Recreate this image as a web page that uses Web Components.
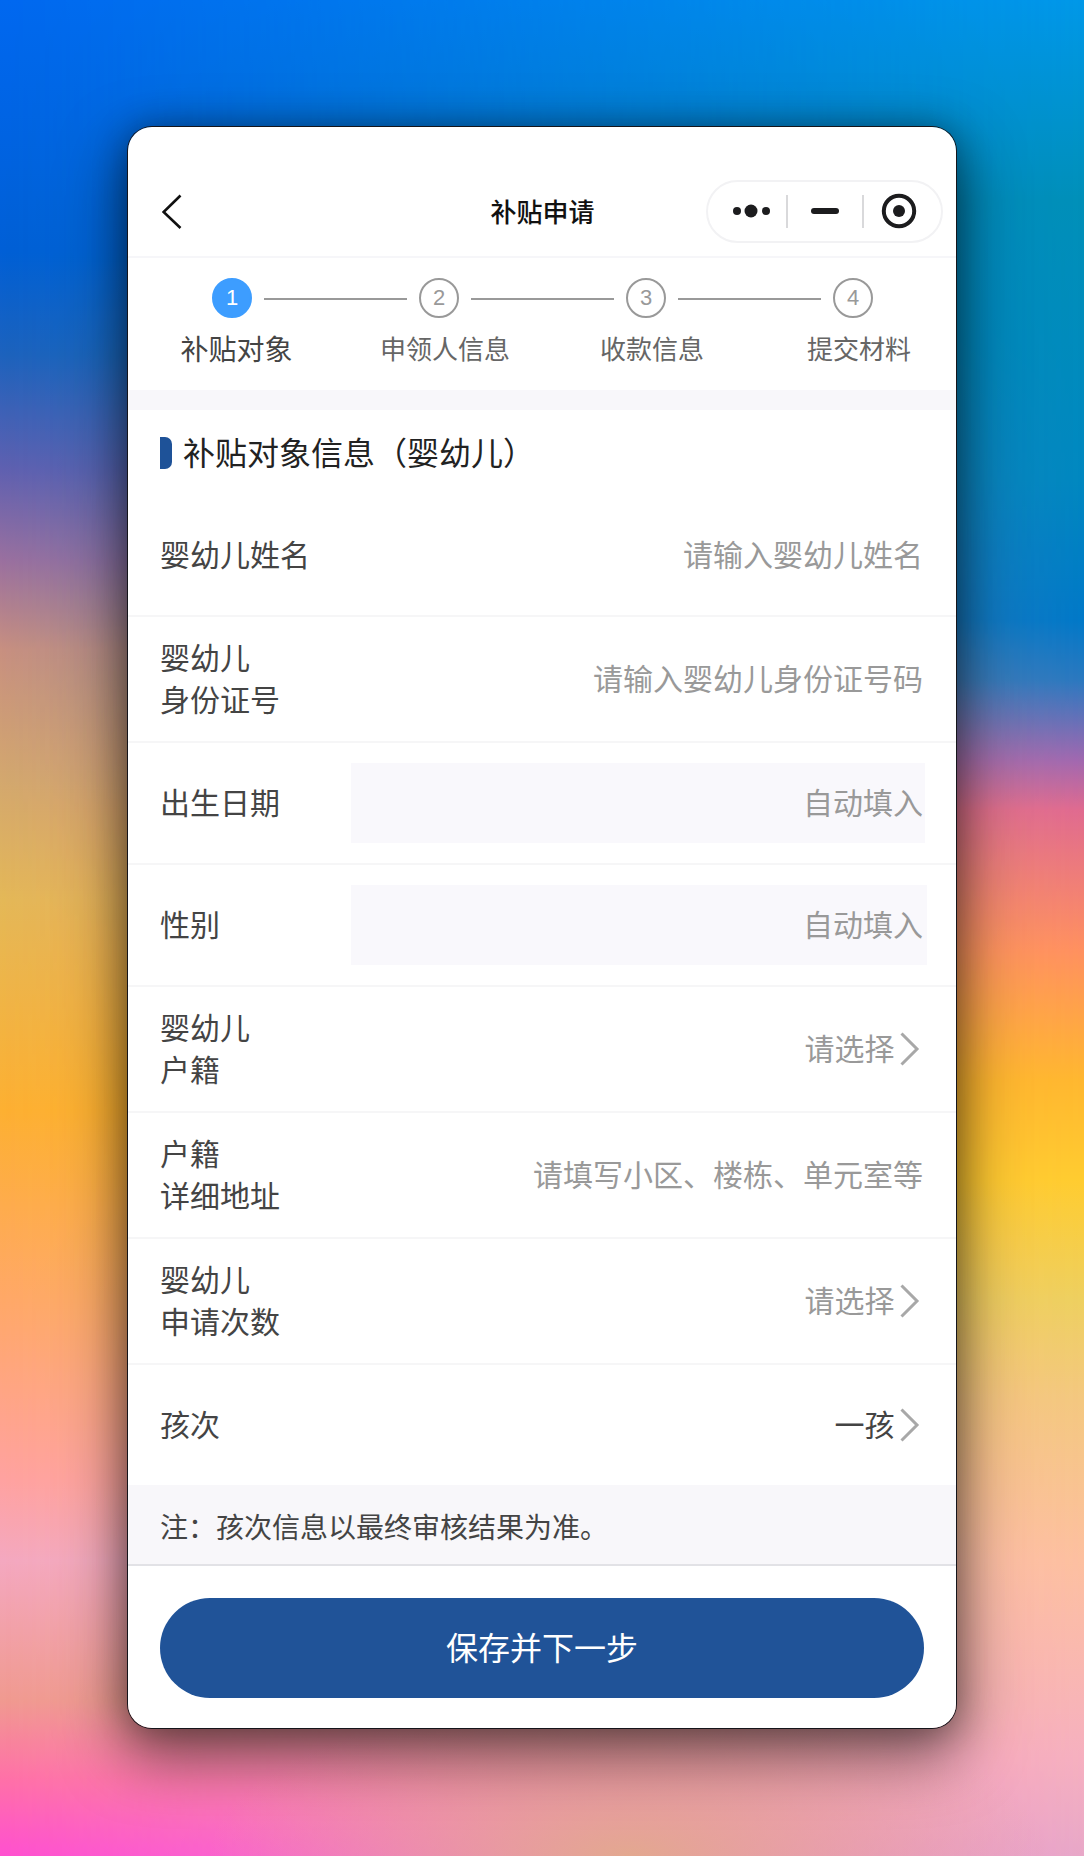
<!DOCTYPE html>
<html lang="zh-CN">
<head>
<meta charset="utf-8">
<title>补贴申请</title>
<style>
  html, body { margin: 0; padding: 0; }
  body { font-family: "Noto Sans CJK SC", "Noto Sans", sans-serif; }
</style>
</head>
<body>
<wx-window>
  <wx-navbar title="补贴申请"></wx-navbar>
  <wx-stepper steps="补贴对象,申领人信息,收款信息,提交材料" current="1"></wx-stepper>
  <wx-section-title>补贴对象信息（婴幼儿）</wx-section-title>

  <wx-form-row><span slot="label">婴幼儿姓名</span>请输入婴幼儿姓名</wx-form-row>
  <wx-form-row><span slot="label">婴幼儿<br>身份证号</span>请输入婴幼儿身份证号码</wx-form-row>
  <wx-form-row readonly style="--box-out:2px"><span slot="label">出生日期</span>自动填入</wx-form-row>
  <wx-form-row readonly style="--box-out:4px"><span slot="label">性别</span>自动填入</wx-form-row>
  <wx-form-row select><span slot="label">婴幼儿<br>户籍</span>请选择</wx-form-row>
  <wx-form-row><span slot="label">户籍<br>详细地址</span>请填写小区、楼栋、单元室等</wx-form-row>
  <wx-form-row select><span slot="label">婴幼儿<br>申请次数</span>请选择</wx-form-row>
  <wx-form-row select filled last><span slot="label">孩次</span>一孩</wx-form-row>

  <wx-note>注：孩次信息以最终审核结果为准。</wx-note>
  <wx-footer-button>保存并下一步</wx-footer-button>
</wx-window>

<template id="window-tpl">
  <style>
    :host {
      display: flex;
      justify-content: center;
      align-items: flex-start;
      position: relative;
      box-sizing: border-box;
      width: 100%;
      height: 1856px;
      padding-top: 127px;
      overflow: hidden;
      /* left edge of the wallpaper */
      background: linear-gradient(180deg,
        #0068f0 0, #005fd6 250px, #1d62bd 355px, #6060b0 470px, #9a709f 560px,
        #c89080 650px, #d3a86e 780px, #e4b858 900px, #fdb032 1110px, #ffa868 1300px,
        #ffa2a0 1480px, #f4a8c0 1560px, #f09a90 1700px, #ff70a8 1780px, #ff50d0 1856px);
    }
    /* right edge of the wallpaper, faded in across the width */
    .right, .low {
      position: absolute;
      inset: 0;
    }
    .right {
      background: linear-gradient(180deg,
        #0098e8 0, #0090b8 200px, #0088c0 480px, #0078c8 620px, #2a78c0 680px,
        #a068b0 760px, #e06a90 810px, #ff9060 950px, #ffb730 1080px, #ffcc30 1180px,
        #eed060 1300px, #f4c880 1400px, #fdc0a0 1560px, #f6b0c0 1760px, #e8a8c8 1856px);
      -webkit-mask-image: linear-gradient(90deg, transparent 0, #000 100%);
      mask-image: linear-gradient(90deg, transparent 0, #000 100%);
    }
    .low {
      background: radial-gradient(420px 160px at 58% 100%, rgba(226,170,140,.95), rgba(226,170,140,0));
    }
    .card {
      position: relative;
      width: 828px;
      height: 1601px;
      background: #fff;
      border-radius: 24px;
      overflow: hidden;
      display: flex;
      flex-direction: column;
    }
    .shadow {
      position: relative;
      border-radius: 24px;
      box-shadow: 0 0 0 1px #15151b, 0 24px 60px 6px rgba(0,0,0,.5), 0 0 34px rgba(0,0,0,.3);
    }
  </style>
  <div class="right"></div>
  <div class="low"></div>
  <div class="shadow"><div class="card"><slot></slot></div></div>
</template>

<template id="navbar-tpl">
  <style>
    :host {
      display: flex;
      align-items: center;
      position: relative;
      box-sizing: border-box;
      height: 131px;
      padding: 53px 13px 14px 34px;
      border-bottom: 2px solid #f6f6f9;
      flex: none;
    }
    .back { flex: none; display: block; margin-top: 1px; }
    .title {
      position: absolute;
      left: 1px;
      right: 0;
      top: 64px;
      text-align: center;
      font-size: 26px;
      line-height: 40px;
      font-weight: 500;
      color: #111;
    }
    .capsule {
      margin-left: auto;
      box-sizing: border-box;
      width: 237px;
      height: 63px;
      border: 2px solid #f2f2f4;
      border-radius: 32px;
      display: flex;
      align-items: center;
      padding-left: 21px;
    }
    .capsule svg { display: block; flex: none; }
    .sep { width: 2px; height: 33px; background: #d9d9db; flex: none; }
  </style>
  <svg class="back" width="20" height="36" viewBox="0 0 20 36"><path d="M18.5 1.5 1.6 18 18.5 34" fill="none" stroke="#111" stroke-width="2.6"/></svg>
  <div class="title"></div>
  <div class="capsule">
    <svg width="44" height="20" viewBox="0 0 44 20" style="margin-right:13px"><circle cx="8" cy="10" r="4" fill="#1c1c1e"/><circle cx="22" cy="10" r="6.5" fill="#1c1c1e"/><circle cx="37" cy="10" r="4" fill="#1c1c1e"/></svg>
    <div class="sep"></div>
    <svg width="28" height="6" viewBox="0 0 28 6" style="margin:0 23px 0 23px"><rect width="28" height="6" rx="3" fill="#1c1c1e"/></svg>
    <div class="sep"></div>
    <svg width="36" height="36" viewBox="0 0 36 36" style="margin-left:17px"><circle cx="18" cy="18" r="15.2" fill="none" stroke="#1c1c1e" stroke-width="4"/><circle cx="18" cy="18" r="6" fill="#1c1c1e"/></svg>
  </div>
</template>

<template id="stepper-tpl">
  <style>
    :host {
      display: block;
      flex: none;
      box-sizing: border-box;
      height: 132px;
      padding-top: 20px;
      font-size: 26px;
      color: #666;
    }
    .dots {
      display: flex;
      align-items: center;
      padding-left: 84px;
      height: 40px;
    }
    .dot {
      flex: none;
      box-sizing: border-box;
      width: 40px;
      height: 40px;
      border: 2px solid #999;
      border-radius: 50%;
      color: #999;
      font: 22px/36px "Liberation Sans", Arial, sans-serif;
      text-align: center;
    }
    .dot.on { background: #3d9dff; border-color: #3d9dff; color: #fff; }
    .line { flex: none; width: 143px; height: 2px; margin: 1px 12px 0; background: #999; }
    .labels {
      display: grid;
      grid-template-columns: repeat(4, 207px);
      margin-top: 12px;
    }
    .label {
      text-align: center;
      padding-left: 13px;
      line-height: 36px;
      white-space: nowrap;
    }
    .label.on { font-size: 28px; color: #444; padding-left: 10px; }
  </style>
  <div class="dots"></div>
  <div class="labels"></div>
</template>

<template id="section-title-tpl">
  <style>
    :host {
      display: flex;
      align-items: center;
      flex: none;
      box-sizing: border-box;
      height: 105px;
      padding-left: 32px;
      border-top: 20px solid #f8f7fa;
      font-size: 32px;
      color: #222;
    }
    .bar {
      flex: none;
      width: 12px;
      height: 32px;
      margin-right: 11px;
      background: #1e5298;
      border-radius: 0 7px 7px 0;
    }
    .text { margin-bottom: 4px; }
  </style>
  <div class="bar"></div>
  <span class="text"><slot></slot></span>
</template>

<template id="form-row-tpl">
  <style>
    :host {
      display: flex;
      align-items: center;
      flex: none;
      box-sizing: border-box;
      padding: 20px 33px 20px 32px;
      border-bottom: 2px solid #f6f6f7;
      font-size: 30px;
      line-height: 42px;
      color: #444;
    }
    :host([last]) { border-bottom: 0; }
    .label { flex: none; width: 191px; margin: -2px 0 2px; }
    .value {
      flex: 1;
      min-height: 80px;
      display: flex;
      align-items: center;
      justify-content: flex-end;
      color: #999;
      white-space: nowrap;
    }
    .text { margin-bottom: 4px; }
    :host([readonly]) .value {
      background: #f9f8fc;
      margin-right: calc(var(--box-out, 3px) * -1);
      padding-right: var(--box-out, 3px);
    }
    :host([filled]) .value { color: #444; }
    svg { display: none; flex: none; margin-left: 5.5px; }
    :host([select]) svg { display: block; }
  </style>
  <div class="label"><slot name="label"></slot></div>
  <div class="value"><span class="text"><slot></slot></span>
    <svg width="23" height="34" viewBox="0 0 23 34"><path d="M1.5 1.5 17 17 1.5 32.5" fill="none" stroke="#a8a8a8" stroke-width="3"/></svg>
  </div>
</template>

<template id="note-tpl">
  <style>
    :host {
      display: block;
      flex: none;
      box-sizing: border-box;
      height: 81px;
      padding: 21px 32px 0;
      background: #f8f7fa;
      border-bottom: 2px solid #e2e2e6;
      font-size: 28px;
      line-height: 40px;
      color: #444;
    }
  </style>
  <slot></slot>
</template>

<template id="footer-button-tpl">
  <style>
    :host {
      display: block;
      flex: none;
      padding: 32px 32px 30px;
    }
    button {
      display: block;
      box-sizing: border-box;
      width: 100%;
      height: 100px;
      border: 0;
      border-radius: 50px;
      background: #205398;
      color: #fff;
      font: inherit;
      font-size: 32px;
      padding: 0 0 4px;
    }
  </style>
  <button type="button"><slot></slot></button>
</template>

<script>
  // every element below clones its own template into an open shadow root
  class TemplateElement extends HTMLElement {
    constructor(tplId) {
      super();
      this.attachShadow({mode: 'open'});
      this.shadowRoot.appendChild(document.getElementById(tplId).content.cloneNode(true));
    }
  }

  class WxWindow extends TemplateElement {
    constructor() { super('window-tpl'); }
  }

  class WxNavbar extends TemplateElement {
    constructor() { super('navbar-tpl'); }
    connectedCallback() {
      this.shadowRoot.querySelector('.title').textContent = this.getAttribute('title');
    }
  }

  class WxStepper extends TemplateElement {
    constructor() { super('stepper-tpl'); }
    connectedCallback() {
      const steps = this.getAttribute('steps').split(',');
      const current = Number(this.getAttribute('current'));
      const dots = this.shadowRoot.querySelector('.dots');
      const labels = this.shadowRoot.querySelector('.labels');
      steps.forEach((name, i) => {
        const on = i + 1 === current ? ' on' : '';
        if (i > 0) dots.insertAdjacentHTML('beforeend', '<div class="line"></div>');
        dots.insertAdjacentHTML('beforeend', `<div class="dot${on}">${i + 1}</div>`);
        labels.insertAdjacentHTML('beforeend', `<div class="label${on}">${name}</div>`);
      });
    }
  }

  class WxSectionTitle extends TemplateElement {
    constructor() { super('section-title-tpl'); }
  }

  class WxFormRow extends TemplateElement {
    constructor() { super('form-row-tpl'); }
  }

  class WxNote extends TemplateElement {
    constructor() { super('note-tpl'); }
  }

  class WxFooterButton extends TemplateElement {
    constructor() { super('footer-button-tpl'); }
  }

  customElements.define('wx-window', WxWindow);
  customElements.define('wx-navbar', WxNavbar);
  customElements.define('wx-stepper', WxStepper);
  customElements.define('wx-section-title', WxSectionTitle);
  customElements.define('wx-form-row', WxFormRow);
  customElements.define('wx-note', WxNote);
  customElements.define('wx-footer-button', WxFooterButton);
</script>
</body>
</html>
